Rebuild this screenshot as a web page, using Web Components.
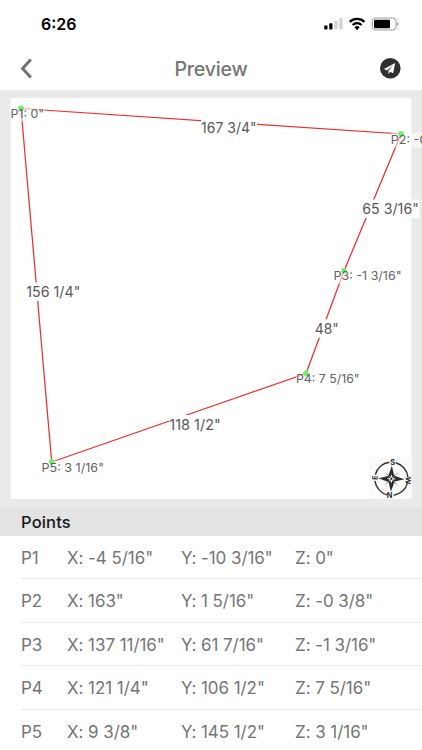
<!DOCTYPE html>
<html lang="en">
<head>
<meta charset="utf-8">
<title>Preview</title>
<style>
  body {
    margin: 0;
    height: 750px;
    overflow: hidden;
    background: #fff;
    font-family: Inter, "Liberation Sans", sans-serif;
  }
</style>
</head>
<body>

<template id="status-bar-template">
  <style>
    :host {
      display: flex;
      justify-content: space-between;
      align-items: center;
      height: 47px;
      padding: 0 23px 0 41px;
      box-sizing: border-box;
      color: #000;
      font-size: 17px;
      font-weight: 600;
    }
    svg { display: block; }
  </style>
  <svg width="38" height="20"><text x="0" y="15.6" textLength="35.5" lengthAdjust="spacingAndGlyphs" font-size="16.6"></text></svg>
  <svg width="76" height="14" viewBox="0 0 76 14">
    <g>
      <rect x="1.2" y="8.4" width="3.3" height="4.2" rx=".8"/>
      <rect x="6.2" y="6.2" width="3.3" height="6.4" rx=".8"/>
      <rect x="11.3" y="3.4" width="3.3" height="9.2" rx=".8" fill="#d2d2d2"/>
      <rect x="16.3" y="1" width="3.3" height="11.6" rx=".8" fill="#d2d2d2"/>
    </g>
    <g fill="none" stroke="#000" stroke-width="2.3">
      <path d="M26.8 4.9a10.5 10.5 0 0 1 14.6 0"/>
      <path d="M29.6 8a6.4 6.4 0 0 1 9 0"/>
    </g>
    <path d="M34.1 13.2l-2.6-2.9a3.8 3.8 0 0 1 5.2 0z"/>
    <rect x="49.2" y="1" width="24" height="12" rx="3.6" fill="none" stroke="#999" stroke-width="1"/>
    <rect x="51" y="2.8" width="16" height="8.4" rx="1.2"/>
    <path d="M74.4 5v4c1.7-.7 1.7-3.3 0-4z" fill="#999"/>
  </svg>
</template>

<template id="nav-bar-template">
  <style>
    :host {
      display: grid;
      grid-template-columns: 60px 1fr 60px;
      align-items: center;
      height: 43px;
      color: #757575;
    }
    svg { display: block; }
    .back { margin-left: 20px; }
    .send { margin-left: 17px; }
    h1 {
      margin: 0;
      font-size: 19.6px;
      font-weight: 550;
      line-height: 44px;
      letter-spacing: -.2px;
      text-align: center;
    }
  </style>
  <svg class="back" width="14" height="22" viewBox="0 0 14 22"><path d="M10.8 1.4L2.6 10.5l8.2 9.1" fill="none" stroke="#737373" stroke-width="3"/></svg>
  <h1><slot></slot></h1>
  <svg class="send" width="22" height="22" viewBox="0 0 22 22">
    <circle cx="11.3" cy="10.3" r="10.3" fill="#303030"/>
    <path d="M16.2 5L4.8 11l3.3 1.5 5.8-5.2-4.5 5.7v2.9l1.8-2.1 2.9 1.5z" fill="#fff"/>
  </svg>
</template>

<template id="compass-rose-template">
  <style>
    :host {
      display: block;
      width: 43px;
      height: 42px;
      background: #fafafa;
    }
    svg { display: block; overflow: visible; }
    text {
      font-size: 7.4px;
      font-weight: 700;
      text-anchor: middle;
      fill: #2b2b2b;
    }
  </style>
  <svg width="43" height="42" viewBox="0 0 43 42">
    <circle cx="22.4" cy="21.8" r="16.6" fill="none" stroke="#333" stroke-width="1.4" stroke-dasharray="19.6 6.48" stroke-dashoffset="-3.9"/>
    <g transform="translate(22.4 21.8) rotate(2)" fill="#2b2b2b">
      <path d="M0-8L1.8-2.3 7-7 2.3-1.8 8 0 2.3 1.8 7 7 1.8 2.3 0 8-1.8 2.3-7 7-2.3 1.8-8 0-2.3-1.8-7-7-1.8-2.3z"/>
      <path d="M0-13L2.7-3.2 13 0 3.2 2.7 0 13-2.7 3.2-13 0-3.2-2.7z"/>
      <path d="M0-4.6L1-1.4 3.4-3.4 1.4-1 4.6 0 1.4 1 3.4 3.4 1 1.4 0 4.6-1 1.4-3.4 3.4-1.4 1-4.6 0-1.4-1-3.4-3.4-1-1.4z" fill="#fff"/>
      <circle r="1.2"/>
    </g>
    <text x="23.6" y="7.7">S</text>
    <text x="20.6" y="41">N</text>
    <text transform="translate(8.6 20.7) rotate(-88)">E</text>
    <text transform="translate(36.4 23.2) rotate(94)">W</text>
  </svg>
</template>

<template id="plan-view-template">
  <style>
    :host {
      display: block;
      position: relative;
      height: 417.5px;
      background: #eaeaea;
      overflow: hidden;
    }
    svg { display: block; }
    ::slotted(compass-rose) {
      position: absolute;
      left: 368.5px;
      top: 367px;
    }
    .outline { fill: none; stroke: #e8302f; stroke-width: 1.25; }
    .vertex { fill: #6df06a; }
    .label { font-size: 12.2px; fill: #626262; }
    .length { font-size: 14.4px; fill: #585858; }
  </style>
  <svg width="422" height="418" viewBox="0 90 422 418">
    <rect x="10.7" y="98" width="400.6" height="401" fill="#fff"/>
    <path class="outline"/>
    <g class="marks"></g>
  </svg>
  <slot></slot>
</template>

<template id="section-title-template">
  <style>
    :host {
      display: block;
      height: 28.5px;
      padding-left: 21px;
      background: #e3e3e3;
      color: #171717;
      font-size: 16.5px;
      font-weight: 550;
      line-height: 29px;
      letter-spacing: .15px;
    }
  </style>
  <slot></slot>
</template>

<template id="point-row-template">
  <style>
    :host {
      display: grid;
      grid-template-columns: 46px 114px 114px 1fr;
      height: 43.4px;
      margin-left: 21px;
      box-sizing: border-box;
      border-bottom: 1px solid #e6e6e6;
      color: #757575;
      font-size: 17px;
      line-height: 44px;
      letter-spacing: -.06px;
      white-space: nowrap;
    }
  </style>
  <slot></slot>
  <span class="x"></span>
  <span class="y"></span>
  <span class="z"></span>
</template>

<status-bar>6:26</status-bar>
<nav-bar>Preview</nav-bar>
<plan-view><compass-rose></compass-rose></plan-view>
<section-title>Points</section-title>
<point-row x='-4 5/16"' y='-10 3/16"' z='0"'><span>P1</span></point-row>
<point-row x='163"' y='1 5/16"' z='-0 3/8"'><span>P2</span></point-row>
<point-row x='137 11/16"' y='61 7/16"' z='-1 3/16"'><span>P3</span></point-row>
<point-row x='121 1/4"' y='106 1/2"' z='7 5/16"'><span>P4</span></point-row>
<point-row x='9 3/8"' y='145 1/2"' z='3 1/16"'><span>P5</span></point-row>

<script>
  class TemplateElement extends HTMLElement {
    constructor () {
      super()
      let template = document.querySelector('#' + this.localName + '-template')
      this.attachShadow({ mode: 'open' }).appendChild(template.content.cloneNode(true))
    }
  }

  class StatusBar extends TemplateElement {
    connectedCallback () {
      // a slot is not rendered inside svg text, so copy the time in
      this.shadowRoot.querySelector('text').textContent = this.textContent
    }
  }

  class NavBar extends TemplateElement {}
  class CompassRose extends TemplateElement {}
  class SectionTitle extends TemplateElement {}

  class PointRow extends TemplateElement {
    connectedCallback () {
      for (let axis of ['x', 'y', 'z']) {
        this.shadowRoot.querySelector('.' + axis).textContent = axis.toUpperCase() + ': ' + this.getAttribute(axis)
      }
    }
  }

  // label: left, baseline, width
  const POINTS = [
    { at: [21, 108.5], text: 'P1: 0"', label: [11, 118, 32.5] },
    { at: [401, 134], text: 'P2: -0', label: [391.3, 144, 35.5] },
    { at: [344, 271], text: 'P3: -1 3/16"', label: [334, 280.3, 67] },
    { at: [306, 373.5], text: 'P4: 7 5/16"', label: [296.5, 383, 62.5] },
    { at: [51.7, 462], text: 'P5: 3 1/16"', label: [42, 471.7, 61.5] }
  ]

  const LENGTHS = [
    { text: '167 3/4"', label: [201.6, 133, 54.5] },
    { text: '65 3/16"', label: [362.8, 214, 55.5] },
    { text: '48"', label: [315.2, 333.7, 23] },
    { text: '118 1/2"', label: [169.8, 429.5, 50.5] },
    { text: '156 1/4"', label: [26.8, 297, 53] }
  ]

  class PlanView extends TemplateElement {
    connectedCallback () {
      this.marks = this.shadowRoot.querySelector('.marks')
      this.shadowRoot.querySelector('.outline').setAttribute('d', 'M' + POINTS.map(p => p.at.join(' ')).join('L') + 'Z')
      POINTS.forEach(p => this._addLabelBox(p, 11, 14.5, .55))
      POINTS.forEach(p => this._add('circle', { class: 'vertex', cx: p.at[0], cy: p.at[1] - .3, r: 2.8 }))
      POINTS.forEach(p => this._addText(p, 'label'))
      LENGTHS.forEach(l => {
        this._addLabelBox(l, 14.5, 18.5, 1)
        this._addText(l, 'length')
      })
    }

    _addLabelBox ({ label: [x, y, width] }, rise, height, opacity) {
      this._add('rect', { x: x - .5, y: y - rise, width: width + 1.5, height, fill: '#fff', 'fill-opacity': opacity })
    }

    _addText ({ text, label: [x, y, width] }, name) {
      this._add('text', { class: name, x: x - .5, y, textLength: width + 1, lengthAdjust: 'spacingAndGlyphs' }).textContent = text
    }

    _add (tag, attributes) {
      let node = document.createElementNS('http://www.w3.org/2000/svg', tag)
      for (let key in attributes) node.setAttribute(key, attributes[key])
      return this.marks.appendChild(node)
    }
  }

  customElements.define('status-bar', StatusBar)
  customElements.define('nav-bar', NavBar)
  customElements.define('compass-rose', CompassRose)
  customElements.define('plan-view', PlanView)
  customElements.define('section-title', SectionTitle)
  customElements.define('point-row', PointRow)
</script>
</body>
</html>
